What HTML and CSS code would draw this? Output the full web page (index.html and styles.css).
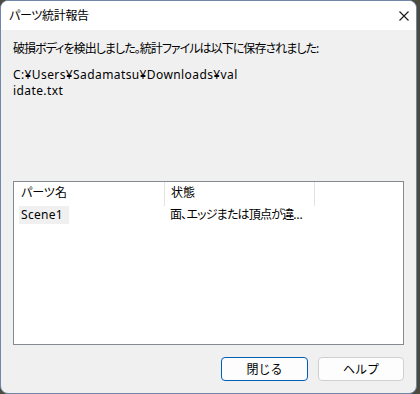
FILE: index.html
```html
<!DOCTYPE html>
<html lang="ja">
<head>
    <meta charset="UTF-8">
    <title>パーツ統計報告</title>
    <link rel="stylesheet" href="styles.css">
</head>
<body>
    <div class="window">
        <div class="titlebar">
            <span class="title">パーツ統計報告</span>
            <span class="close">
                <svg width="10" height="10" viewBox="0 0 10 10">
                    <path d="M0.5 0.5 L9.5 9.5 M9.5 0.5 L0.5 9.5" stroke="#1a1a1a" stroke-width="1.1" fill="none"/>
                </svg>
            </span>
        </div>
        <div class="content">
            <p class="message">破損ボディを検出しました。統計ファイルは以下に保存されました:</p>
            <p class="path">C:¥Users¥Sadamatsu¥Downloads¥val<br>idate.txt</p>

            <div class="list">
                <div class="list-head">
                    <div class="col col-name">パーツ名</div>
                    <div class="col col-state">状態</div>
                    <div class="col col-rest"></div>
                </div>
                <div class="list-row">
                    <div class="cell cell-name"><span class="selected">Scene1</span></div>
                    <div class="cell cell-state">面、エッジまたは頂点が違…</div>
                </div>
            </div>

            <div class="buttons">
                <button class="btn btn-default">閉じる</button>
                <button class="btn">ヘルプ</button>
            </div>
        </div>
    </div>
</body>
</html>
```

FILE: styles.css
```css
body {
    margin: 0;
    background-color: #4b4a3c;
    font-family: "Noto Sans", "Noto Sans CJK JP", sans-serif;
    font-size: 12px;
    color: #000;
    font-feature-settings: "palt";
}
.window {
    width: 417px;
    height: 394px;
    box-sizing: border-box;
    border: 1px solid #7088a8;
    border-radius: 8px;
    overflow: hidden;
    background-color: #f0f0f0;
}
.titlebar {
    height: 29px;
    background-color: #fff;
    display: flex;
    align-items: center;
    justify-content: space-between;
    padding: 0 7px 0 8px;
}
.title {
    line-height: 16px;
    letter-spacing: -0.3px;
}
.close {
    display: flex;
}
.content {
    padding: 11px 12px 0 12px;
}
.message {
    margin: 0;
    line-height: 16px;
    letter-spacing: -0.95px;
}
.path {
    margin: 10px 0 0 0;
    line-height: 16px;
    letter-spacing: 0.4px;
}
.list {
    margin-top: 82px;
    height: 164px;
    box-sizing: border-box;
    border: 1px solid #858a91;
    background-color: #fff;
}
.list-head {
    display: flex;
    height: 24px;
}
.col {
    box-sizing: border-box;
    line-height: 22px;
    border-right: 1px solid #e3e3e3;
}
.col-name {
    width: 151px;
    padding-left: 7px;
}
.col-state {
    width: 150px;
    padding-left: 6px;
}
.col-rest {
    border-right: none;
}
.list-row {
    display: flex;
    height: 18px;
    line-height: 18px;
}
.cell-name {
    width: 151px;
    padding-left: 5px;
    box-sizing: border-box;
}
.selected {
    display: inline-block;
    width: 50px;
    box-sizing: border-box;
    padding-left: 2px;
    letter-spacing: 0.3px;
    background-color: #f0f0f0;
}
.cell-state {
    padding-left: 5px;
    letter-spacing: -0.8px;
}
.buttons {
    display: flex;
    justify-content: flex-end;
    gap: 10px;
    margin-top: 12px;
}
.btn {
    width: 86px;
    height: 24px;
    box-sizing: border-box;
    border: 1px solid #d0d0d0;
    border-radius: 4px;
    background-color: #fdfdfd;
    font-family: inherit;
    font-size: 12px;
    color: #000;
    padding: 0;
}
.btn-default {
    width: 87px;
    border-color: #005fb8;
}
```
